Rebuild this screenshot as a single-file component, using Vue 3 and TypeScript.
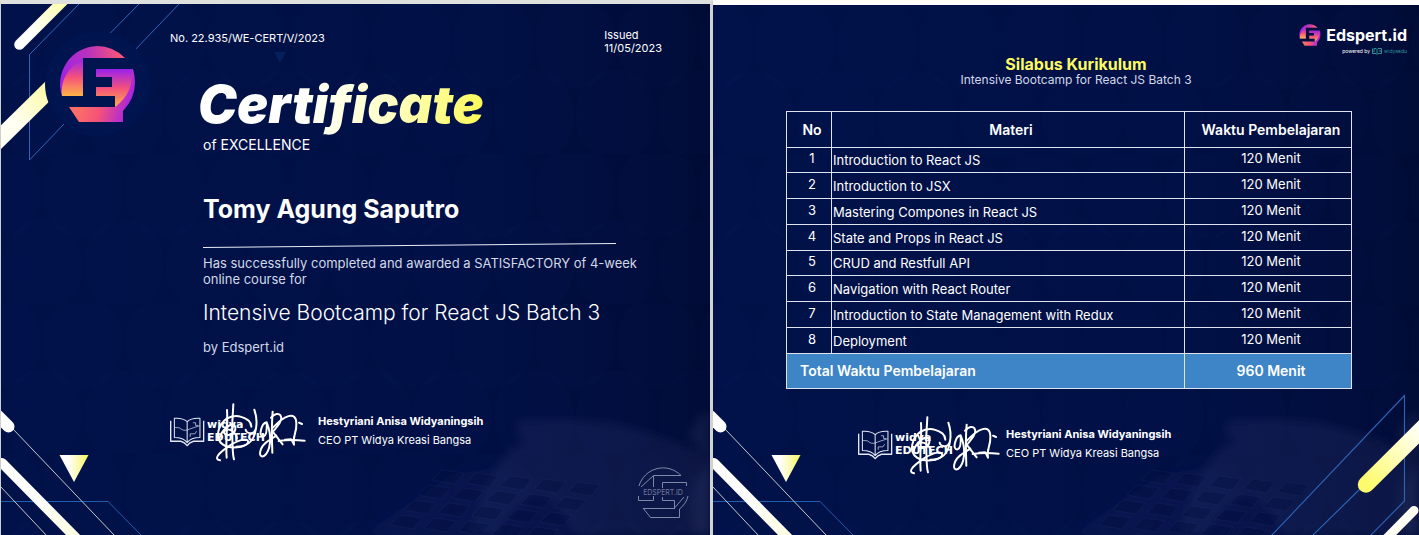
<script setup lang="ts">
interface Lesson {
  no: number
  title: string
  time: string
}

const titles: string[] = [
  'Introduction to React JS',
  'Introduction to JSX',
  'Mastering Compones in React JS',
  'State and Props in React JS',
  'CRUD and Restfull API',
  'Navigation with React Router',
  'Introduction to State Management with Redux',
  'Deployment',
]

const lessons: Lesson[] = titles.map((title, i) => ({ no: i + 1, title, time: '120 Menit' }))

const keys: { x: number; y: number }[] = []
for (let row = 0; row < 4; row++) {
  for (let col = 0; col < 5; col++) {
    keys.push({ x: 20 + col * 34 + row * 14, y: 160 - row * 15 + col * 3 })
  }
}
</script>

<template>
  <svg class="defs" aria-hidden="true">
    <defs>
      <linearGradient id="barTop" gradientUnits="userSpaceOnUse" x1="19" y1="44" x2="60" y2="4">
        <stop offset="0.3" stop-color="#fff" />
        <stop offset="1" stop-color="#ffffb4" />
      </linearGradient>
      <linearGradient id="barMid" gradientUnits="userSpaceOnUse" x1="1" y1="137" x2="48" y2="92">
        <stop offset="0.3" stop-color="#fffff4" />
        <stop offset="1" stop-color="#fdfbac" />
      </linearGradient>
      <linearGradient id="barLow" gradientUnits="userSpaceOnUse" x1="3" y1="463" x2="80" y2="540">
        <stop offset="0.4" stop-color="#fff" />
        <stop offset="1" stop-color="#fffde0" />
      </linearGradient>
      <linearGradient id="barRight" gradientUnits="userSpaceOnUse" x1="1360" y1="490" x2="1419" y2="432">
        <stop offset="0.1" stop-color="#fdfb6c" />
        <stop offset="1" stop-color="#fffff2" />
      </linearGradient>
      <linearGradient id="tri" x1="0" y1="0" x2="1" y2="0">
        <stop offset="0.3" stop-color="#fff" />
        <stop offset="1" stop-color="#f7f55e" />
      </linearGradient>
      <linearGradient id="rimA" gradientUnits="userSpaceOnUse" x1="62" y1="70" x2="125" y2="58">
        <stop offset="0" stop-color="#a125e0" />
        <stop offset="0.45" stop-color="#b832bd" />
        <stop offset="1" stop-color="#ff5a70" />
      </linearGradient>
      <linearGradient id="rimB" gradientUnits="userSpaceOnUse" x1="80" y1="105" x2="128" y2="118">
        <stop offset="0" stop-color="#fb6d68" />
        <stop offset="0.4" stop-color="#f55377" />
        <stop offset="1" stop-color="#a522e6" />
      </linearGradient>
      <linearGradient id="coreA" x1="0" y1="0" x2="0" y2="1">
        <stop offset="0" stop-color="#9821ee" />
        <stop offset="0.5" stop-color="#f4507d" />
        <stop offset="1" stop-color="#ffb347" />
      </linearGradient>
      <pattern id="scales" width="82" height="150" patternUnits="userSpaceOnUse">
        <g fill="#0a2a72" fill-opacity="0.05">
          <ellipse cx="0" cy="38" rx="40" ry="46" />
          <ellipse cx="82" cy="38" rx="40" ry="46" />
          <ellipse cx="41" cy="112" rx="40" ry="46" />
        </g>
      </pattern>
      <filter id="soft" x="-20%" y="-20%" width="140%" height="140%"><feGaussianBlur stdDeviation="5" /></filter>
      <symbol id="eMark" viewBox="59 45 78 78">
        <path fill="url(#rimA)" d="M62 96A38 38 0 0 1 97 46Q113 46 125 58H83V96Z" />
        <path fill="url(#coreA)" d="M83 58V96H62Q59 74 83 58Z" />
        <path fill="url(#rimB)" d="M96 69H133Q140 93 123 111V122H79L69 107H115V96H96V87H112V77H96Z" />
        <path fill="url(#coreA)" d="M96 69H132Q134 93 115 107V96H96V87H112V77H96Z" />
      </symbol>
      <symbol id="book" viewBox="510 82 104 92">
        <g fill="none" stroke="#e4e9f5" stroke-linejoin="round">
          <path stroke-width="4" d="M512 93V154H542Q554 157 561 167Q568 157 580 154H610V93" />
          <path stroke-width="3" d="M561 96Q548 84 523 86V143Q550 143 561 158Q572 143 599 143V86Q574 84 561 96V158" />
          <path stroke-width="2" d="M525 113Q540 112 545 119Q554 125 570 117L598 108M578 99h8v8h8M570 141v-9h14l5-8" />
        </g>
      </symbol>
      <symbol id="lowArt" viewBox="1 400 150 135">
        <path fill="none" stroke="#205dae" stroke-width="1" d="M0 501.500H108L142 536" />
        <path fill="none" stroke="#d9dcd4" stroke-width="0.9" d="M13 429L115 536M0 486L47 536" />
        <path stroke="#fff" stroke-width="12" stroke-linecap="round" d="M-8 410L8.500 426.500" />
        <path stroke="url(#barLow)" stroke-width="10" stroke-linecap="round" d="M2 463L78 540" />
        <path fill="url(#tri)" d="M59.500 455H88.500L74 482Z" />
      </symbol>
      <symbol id="desk" viewBox="0 0 340 170">
        <g filter="url(#soft)">
          <path fill="#454580" fill-opacity="0.17" d="M100 170Q112 118 130 98Q142 78 158 78Q140 66 150 56Q210 52 250 60Q300 72 340 94V170H205Q190 136 168 130Q140 140 128 170Z" />
          <path fill="#6f709c" fill-opacity="0.12" d="M318 70Q330 45 340 48V170H325Q312 120 340 98Z" />
          <path fill="#20306e" fill-opacity="0.16" d="M0 165L80 110L140 100L210 150V170H0Z" />
        </g>
        <g fill="#000d3c" fill-opacity="0.3" stroke="#44508a" stroke-opacity="0.12">
          <path v-for="(k, i) in keys" :key="i" :d="`M${k.x} ${k.y}l10 -10l22 3l-9 11z`" />
        </g>
      </symbol>
      <symbol id="signMark" viewBox="510 36 432 180">
        <g fill="none" stroke="#fff" stroke-width="6" stroke-linecap="round" stroke-linejoin="round">
          <path d="M700 43Q696 90 697 144T702 208" />
          <path d="M681 60C684 100 676 155 680 203" />
          <path d="M660 211C640 208 654 190 690 166C725 144 748 145 744 158C736 174 690 178 668 163C642 145 655 104 680 86C704 71 724 77 745 91Q753 98 754 110" />
          <path d="M657 148C665 118 702 88 706 113C708 132 680 143 672 128C674 112 704 116 711 145" />
          <path d="M763 59Q773 88 768 115C762 138 738 130 737 119M768 115C762 159 739 170 709 170" />
          <path d="M800 97C784 100 773 142 791 139Q802 136 800 97C818 140 811 184 792 198C772 206 777 169 807 151L829 137" />
          <path d="M818 65Q814 110 817 188" />
          <path d="M813 83C837 58 858 78 830 111Q821 124 818 125L848 163M816 116C852 76 888 61 889 100C891 130 876 140 882 164L875 150" />
          <path d="M836 153Q870 147 914 152M855 149L873 148M897 98L906 102" />
        </g>
      </symbol>
    </defs>
  </svg>

  <main class="page">
    <section class="card certificate" aria-label="Certificate">
      <svg class="texture" aria-hidden="true"><rect width="100%" height="100%" fill="url(#scales)" /></svg>
      <svg class="desk" aria-hidden="true"><use href="#desk" /></svg>
      <svg class="top-art" viewBox="1 4 300 170" aria-hidden="true">
        <path fill="none" stroke="#2f66bb" stroke-width="1" d="M80 3L29.500 54.500V160L180 3M140 3L60 84" />
        <path stroke="url(#barTop)" stroke-width="10.500" stroke-linecap="round" d="M19.500 44.500L65 -1" />
        <path stroke="url(#barMid)" stroke-width="17" d="M-9 147L55 84" />
        <circle cx="97.500" cy="84" r="52.500" fill="#001450" />
        <use href="#eMark" x="59" y="45" width="78" height="78" />
        <path fill="#04205a" d="M274 52H286L280 63Z" />
      </svg>
      <svg class="low-art" aria-hidden="true"><use href="#lowArt" /></svg>
      <svg class="stamp" viewBox="636 464 54 56" aria-hidden="true">
        <g fill="none" stroke="#8c94b2" stroke-width="0.9">
          <path d="M639 486A25 25 0 0 1 681 475.500H653.500V487M653 476L641 487M662.500 488V482.500H686.500V486M638.500 496V500.500H653.500V496M662.500 497V500.500H674.500V508L684 497M643 508.500H675M643 508L650.500 517.500H679.500V509Q686 504 688 496" />
        </g>
        <text x="663" y="494.500" text-anchor="middle">EDSPERT.ID</text>
      </svg>

      <div class="content">
        <header class="meta">
          <p class="number">No. 22.935/WE-CERT/V/2023</p>
          <p class="issued">Issued<br />11/05/2023</p>
        </header>
        <div class="body">
          <h1>Certificate</h1>
          <p class="sub">of EXCELLENCE</p>
          <h2>Tomy Agung Saputro</h2>
          <svg class="rule" viewBox="0 0 412 6" preserveAspectRatio="none" aria-hidden="true">
            <path stroke="#e8ebf5" d="M0 5.500L412 1.500" />
          </svg>
          <p class="reason">Has successfully completed and awarded a SATISFACTORY of 4-week online course for</p>
          <p class="course">Intensive Bootcamp for React JS Batch 3</p>
          <p class="by">by Edspert.id</p>
        </div>
        <footer class="sign">
          <div class="mark">
            <svg class="book" aria-hidden="true"><use href="#book" /></svg>
            <p class="wordmark">widya<br />EDUTECH</p>
            <svg class="ink" aria-hidden="true"><use href="#signMark" /></svg>
          </div>
          <p class="signer"><strong>Hestyriani Anisa Widyaningsih</strong><br />CEO PT Widya Kreasi Bangsa</p>
        </footer>
      </div>
    </section>

    <section class="card syllabus" aria-label="Silabus Kurikulum">
      <svg class="texture" aria-hidden="true"><rect width="100%" height="100%" fill="url(#scales)" /></svg>
      <svg class="desk" aria-hidden="true"><use href="#desk" /></svg>
      <svg class="low-art" aria-hidden="true"><use href="#lowArt" /></svg>
      <svg class="right-art" viewBox="1259 385 160 150" aria-hidden="true">
        <path fill="none" stroke="#2b64b8" stroke-width="1.100" d="M1271 536L1404.500 395.500V501L1370 536M1312 536L1360 489" />
        <path stroke="url(#barRight)" stroke-width="16.500" stroke-linecap="round" d="M1366 484.500L1430 421" />
        <path stroke="#fffff4" stroke-width="9" stroke-linecap="round" d="M1414 510.500L1380 545" />
      </svg>

      <div class="content">
        <header class="brand">
          <p class="brand-name"><svg aria-hidden="true"><use href="#eMark" /></svg>Edspert.id</p>
          <p class="powered">
            powered by
            <svg viewBox="0 0 10 7" aria-hidden="true">
              <path fill="none" stroke="#2b9297" d="M0.500 0.500V5.500H4L5 6.500L6 5.500H9.500V0.500H6L5 1.500L4 0.500H2V4M5 1.500V6M7 3H9" />
            </svg>
            <span>widyaedu</span>
          </p>
        </header>
        <h2>Silabus Kurikulum</h2>
        <p class="batch">Intensive Bootcamp for React JS Batch 3</p>
        <table>
          <thead>
            <tr>
              <th class="no" scope="col">No</th>
              <th scope="col">Materi</th>
              <th class="time" scope="col">Waktu Pembelajaran</th>
            </tr>
          </thead>
          <tbody>
            <tr v-for="lesson in lessons" :key="lesson.no">
              <td>{{ lesson.no }}</td>
              <td class="title">{{ lesson.title }}</td>
              <td>{{ lesson.time }}</td>
            </tr>
          </tbody>
          <tfoot>
            <tr>
              <th class="total" colspan="2" scope="row">Total Waktu Pembelajaran</th>
              <th>960 Menit</th>
            </tr>
          </tfoot>
        </table>
        <footer class="sign">
          <div class="mark">
            <svg class="book" aria-hidden="true"><use href="#book" /></svg>
            <p class="wordmark">widya<br />EDUTECH</p>
            <svg class="ink" aria-hidden="true"><use href="#signMark" /></svg>
          </div>
          <p class="signer"><strong>Hestyriani Anisa Widyaningsih</strong><br />CEO PT Widya Kreasi Bangsa</p>
        </footer>
      </div>
    </section>
  </main>
</template>

<style>
body {
  margin: 0;
  background: #fff;
}
</style>

<style scoped>
.defs {
  position: absolute;
  width: 0;
  height: 0;
}
.page {
  display: grid;
  grid-template-columns: 713fr 706fr;
  min-height: 100vh;
  font-family: Inter, "Open Sans", sans-serif;
  color: #fff;
}
p,
h1,
h2 {
  margin: 0;
}
.card {
  position: relative;
  overflow: hidden;
  background: linear-gradient(90deg, #001148 0%, #001045 60%, #000d3b 90%, #000b34 100%);
}
.certificate {
  border-top: 4px solid #dfe1df;
  border-left: 1px solid #cfcfcf;
  border-right: 3px solid #d2d2d2;
}
.syllabus {
  border-top: 5px solid #fff;
}
.texture,
.desk,
.top-art,
.low-art,
.right-art,
.stamp {
  position: absolute;
}
.texture {
  inset: 0;
  width: 100%;
  height: 100%;
}
.desk {
  right: 0;
  bottom: 0;
  width: 340px;
  height: 170px;
}
.top-art {
  top: 0;
  left: 0;
  width: 300px;
  height: 170px;
}
.low-art {
  left: 0;
  bottom: 0;
  width: 150px;
  height: 135px;
}
.right-art {
  right: 0;
  bottom: 0;
  width: 160px;
  height: 150px;
}
.stamp {
  right: 20px;
  bottom: 15px;
  width: 54px;
  height: 56px;
}
.stamp text {
  font-size: 7px;
  font-weight: 300;
  fill: #8f97b5;
}
.content {
  position: relative;
}

.certificate .content {
  padding: 25px 48px 0 169px;
}
.meta {
  display: flex;
  justify-content: space-between;
  font-size: 11px;
}
.number {
  line-height: 18px;
}
.issued {
  line-height: 13px;
}
.body {
  padding-left: 33px;
}
h1 {
  width: max-content;
  margin: 20px 0 0 -5px;
  padding-right: 4px;
  font-size: 52px;
  line-height: 60px;
  font-weight: 900;
  font-style: italic;
  background: linear-gradient(100deg, #fff 35%, #ffffc8 65%, #fbf94e 100%);
  -webkit-background-clip: text;
  background-clip: text;
  color: transparent;
}
.sub {
  font-size: 14px;
  line-height: 20px;
}
.certificate h2 {
  margin-top: 39px;
  font-size: 25px;
  line-height: 30px;
  font-weight: 700;
}
.rule {
  display: block;
  width: calc(100% - 46px);
  height: 6px;
  margin-top: 18px;
}
.reason {
  margin-top: 7px;
  font-size: 13px;
  line-height: 16px;
  color: #d3d8e8;
}
.course {
  margin-top: 11px;
  font-size: 21px;
  line-height: 30px;
  font-weight: 300;
}
.by {
  margin-top: 10px;
  font-size: 13px;
  line-height: 18px;
  color: #d3d8e8;
}
.sign {
  display: flex;
  gap: 4px;
  margin-top: 46px;
}
.mark {
  position: relative;
  display: flex;
  width: 144px;
  height: 60px;
}
.book {
  width: 35px;
  height: 31px;
  margin-top: 15px;
}
.wordmark {
  padding: 16px 0 0 2px;
  font-family: "DejaVu Sans", sans-serif;
  font-size: 11px;
  line-height: 13px;
  font-weight: 700;
}
.ink {
  position: absolute;
  top: 0;
  left: 0;
  width: 144px;
  height: 60px;
}
.syllabus .ink {
  left: 6px;
}
.signer {
  padding-top: 10px;
  font-size: 11px;
  line-height: 19px;
}
.signer strong {
  font-weight: 700;
}

.syllabus .content {
  padding: 19px 67px 0 73px;
}
.brand {
  display: flex;
  flex-direction: column;
  align-items: flex-end;
  margin-right: -55px;
}
.brand-name {
  display: flex;
  gap: 5px;
  font-size: 16px;
  line-height: 22px;
  font-weight: 700;
}
.brand-name svg {
  width: 22px;
  height: 22px;
}
.powered {
  display: flex;
  align-items: center;
  gap: 2px;
  height: 10px;
  font-size: 5px;
  line-height: 10px;
}
.powered svg {
  width: 10px;
  height: 7px;
}
.powered span {
  color: #2b9297;
}
.syllabus h2 {
  padding-left: 14px;
  font-size: 16px;
  line-height: 16px;
  font-weight: 700;
  text-align: center;
  color: #fdfb5e;
}
.batch {
  padding-left: 14px;
  font-size: 12px;
  line-height: 16px;
  text-align: center;
  color: #d3d8e8;
}
table {
  width: 100%;
  margin-top: 23px;
  border-collapse: collapse;
  table-layout: fixed;
  font-size: 13px;
  line-height: 16px;
}
th,
td {
  box-sizing: border-box;
  padding: 0 0 0 6px;
  border: 1px solid #dfe3ef;
  text-align: center;
}
th {
  height: 36px;
  font-size: 14px;
  font-weight: 600;
}
td {
  height: 26px;
  padding-bottom: 4px;
}
tbody tr:nth-child(4n + 1) td {
  height: 25px;
}
.no {
  width: 45px;
}
.time {
  width: 167px;
}
td.title {
  padding: 0 0 0 1px;
  text-align: left;
}
tfoot th {
  height: 35px;
  background: #3e85c7;
}
.total {
  padding-left: 13px;
  text-align: left;
}
.syllabus .sign {
  margin: 26px 0 0 72px;
}
</style>
